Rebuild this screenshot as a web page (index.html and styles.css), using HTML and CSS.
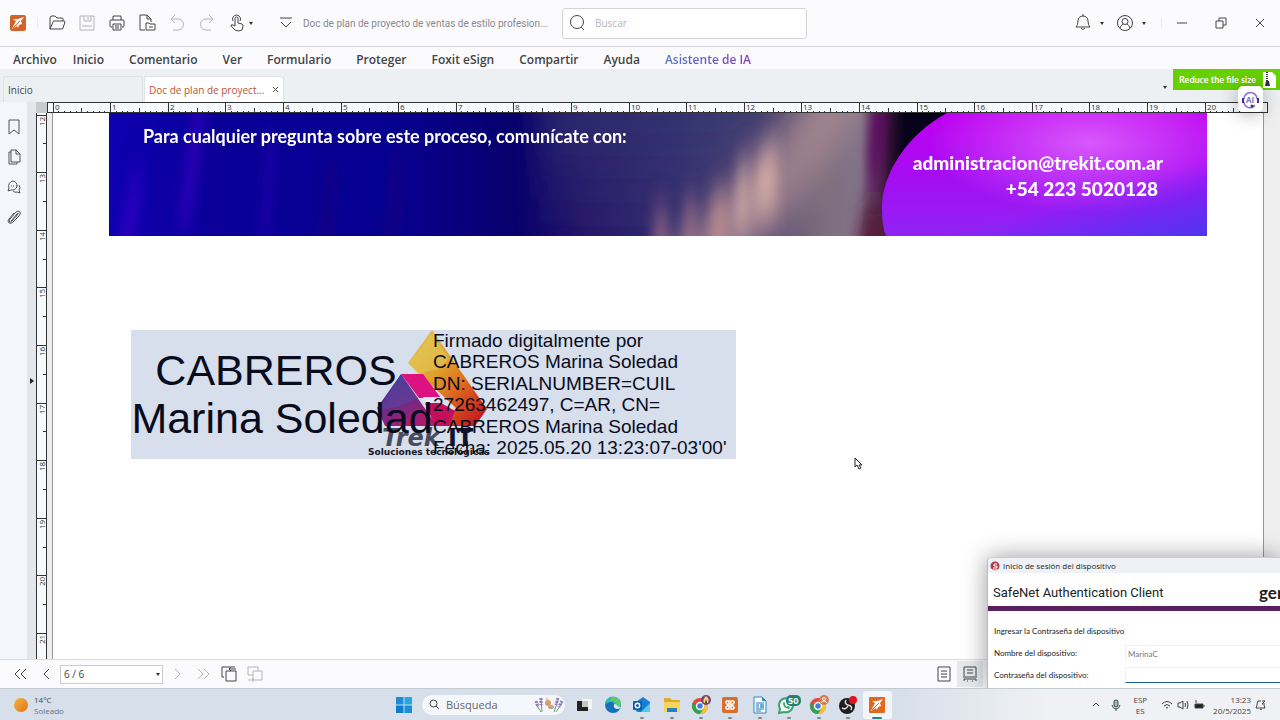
FILE: index.html
```html
<!DOCTYPE html>
<html lang="es">
  <head>
    <meta charset="utf-8">
    <title>Doc de plan de proyecto de ventas</title>
    <link rel="stylesheet" href="styles.css">
  </head>
  <body>
    <header class="titlebar">
      <svg class="logo" width="16" height="16" viewBox="0 0 16 16"><rect width="16" height="16" rx="2" fill="#d0622a"/><path d="M14 2 8 4 3 4l3 2-4 8 5-3 1 2 1-3 3-1-1-3z" fill="#fff"/><path d="M3 13 10 6" stroke="#d0622a" stroke-width="1"/></svg>
      <span class="sep"></span>
      <button class="tool" aria-label="Abrir"><svg width="18" height="18" viewBox="0 0 18 18"><path d="M2 15V4q0-2 2-2h3l2 2h5q1 0 1 1v2M2 15 5 8q0-1 1-1h10q1 0 1 1l-2 6q0 1-1 1z"/></svg></button>
      <button class="tool faded" aria-label="Guardar"><svg width="18" height="18" viewBox="0 0 18 18"><path d="M2 2h14v14H2zM6 2v5h7V2M10 3v3M4 12h10"/></svg></button>
      <button class="tool" aria-label="Imprimir"><svg width="18" height="18" viewBox="0 0 18 18"><path d="M5 6V2h8v4M4 13H3q-1 0-1-1V7q0-1 1-1h12q1 0 1 1v5q0 1-1 1h-1M5 10h8v6H5zM7 12h4M7 14h4"/></svg></button>
      <button class="tool" aria-label="Convertir"><svg width="18" height="18" viewBox="0 0 18 18"><path d="M7 16H2V1h7l4 4v3M9 1v4h4M8 16V9h3l1 1h5v6zM11 13h4"/></svg></button>
      <button class="tool faded" aria-label="Deshacer"><svg width="18" height="18" viewBox="0 0 18 18"><path d="M7 1 3 5l4 4M3 5h7a5 5 0 0 1 0 11H5"/></svg></button>
      <button class="tool faded" aria-label="Rehacer"><svg width="18" height="18" viewBox="0 0 18 18"><path d="m11 1 4 4-4 4M15 5H8a5 5 0 0 0 0 11h5"/></svg></button>
      <button class="tool" aria-label="Mano"><svg width="18" height="18" viewBox="0 0 18 18"><path d="M7 12V4.500a1.500 1.500 0 0 1 3 0V9l4 1q1 .500 1 2l-1 4q-4 2-7 0l-4-4q0-2 2-1zM5 7a4 4 0 1 1 7 0"/></svg></button>
      <span class="caret"></span>
      <button class="tool more" aria-label="Más herramientas"><svg width="14" height="14" viewBox="0 0 14 14"><path d="M1 2h12M2 6l5 5 5-5"/></svg></button>
      <span class="doc-title">Doc de plan de proyecto de ventas de estilo profesion...</span>
      <label class="search">
        <svg width="18" height="18" viewBox="0 0 18 18"><circle cx="8" cy="8" r="6.500"/><path d="m12 13 3 3"/></svg>
        <input type="text" placeholder="Buscar" aria-label="Buscar">
      </label>
      <div class="window-tools">
        <button class="tool" aria-label="Notificaciones"><svg width="18" height="18" viewBox="0 0 18 18"><path d="M2 13q2-2 2-6c0-3 2-5 5-5s5 2 5 5q0 4 2 6zM7 14q2 3 4 0M9 0v2"/></svg></button>
        <span class="caret"></span>
        <button class="tool" aria-label="Cuenta"><svg width="18" height="18" viewBox="0 0 18 18"><circle cx="9" cy="9" r="7.500"/><circle cx="9" cy="7.500" r="3"/><path d="M4 14q1-3 3-4M14 14q-1-3-3-4"/></svg></button>
        <span class="caret"></span>
        <span class="sep"></span>
        <button class="win" aria-label="Minimizar"><svg width="12" height="12" viewBox="0 0 12 12"><path d="M1 6h10"/></svg></button>
        <button class="win" aria-label="Restaurar"><svg width="12" height="12" viewBox="0 0 12 12"><path d="M1 4h7v7H1zM4 4V1h7v7H8"/></svg></button>
        <button class="win" aria-label="Cerrar"><svg width="12" height="12" viewBox="0 0 12 12"><path d="m2 2 8 8M10 2l-8 8"/></svg></button>
      </div>
    </header>

    <nav class="menu">
      <a class="file" href="#">Archivo</a>
      <a href="#">Inicio</a>
      <a href="#">Comentario</a>
      <a href="#">Ver</a>
      <a href="#">Formulario</a>
      <a href="#">Proteger</a>
      <a href="#">Foxit eSign</a>
      <a href="#">Compartir</a>
      <a href="#">Ayuda</a>
      <a href="#"><span class="ai">Asistente de IA</span></a>
    </nav>

    <div class="tabs">
      <a class="tab" href="#">Inicio</a>
      <div class="tab active"><a href="#">Doc de plan de proyect...</a><button aria-label="Cerrar pestaña"><svg width="7" height="7" viewBox="0 0 7 7"><path d="m1 1 5 5M6 1 1 6"/></svg></button></div>
      <span class="caret tab-caret"></span>
      <a class="promo" href="#">Reduce the file size
        <svg width="13" height="16" viewBox="0 0 13 16"><path d="M0 0h9l4 4v12H0z" fill="#fff"/><path d="M4 0v9" stroke="#333" stroke-width="2" stroke-dasharray="1 1"/><path d="M3 9h3l1 5H2z" fill="#333"/></svg>
      </a>
    </div>

    <main class="workspace">
      <aside class="panel">
        <button aria-label="Marcadores"><svg width="14" height="16" viewBox="0 0 14 16"><path d="M2 1h10v14l-5-4-5 4z"/></svg></button>
        <button aria-label="Páginas"><svg width="14" height="16" viewBox="0 0 14 16"><path d="M4 1h5l4 4v8H4zM9 1v4h4M4 3H2v12h8v-2"/></svg></button>
        <button aria-label="Comentarios"><svg width="14" height="16" viewBox="0 0 14 16"><path d="M6 2a5 4.500 0 1 1-2 9l-3 1 1-3a5 5 0 0 1 4-7zM12 6q2 3 0 5l1 3-3-1q-2 1-4-1M4 7h1M6 7h1M9 7h1"/></svg></button>
        <button aria-label="Adjuntos"><svg width="14" height="16" viewBox="0 0 14 16"><path d="m4 12 6-7q2-2 1 0l-6 7q-2 2-3 0 0-1 1-2l6-7q2-2 4 0 1 2-1 4l-6 6q-2 2-4 1-2-2 0-4l5-6"/></svg></button>
      </aside>
      <div class="collapse"></div>
      <div class="canvas">
        <div class="corner"></div>
        <svg class="ruler-h" id="rulerH"></svg>
        <svg class="ruler-v" id="rulerV"></svg>
        <div class="sheet">
          <div class="page">
            <section class="banner">
              <svg class="banner-art" viewBox="0 0 1098 123" preserveAspectRatio="none">
                <defs>
                  <linearGradient id="night" x1="0" x2="1" y1="0" y2="0">
                    <stop offset="0" stop-color="#0e00b0"/>
                    <stop offset=".1" stop-color="#0a0098"/>
                    <stop offset=".26" stop-color="#070090"/>
                    <stop offset=".37" stop-color="#07006c"/>
                    <stop offset=".43" stop-color="#261668"/>
                    <stop offset=".52" stop-color="#383070"/>
                    <stop offset=".6" stop-color="#5c4e74"/>
                    <stop offset=".65" stop-color="#7c6c7c"/>
                    <stop offset=".685" stop-color="#84748a"/>
                    <stop offset=".71" stop-color="#321232"/>
                    <stop offset=".725" stop-color="#05021a"/>
                  </linearGradient>
                  <linearGradient id="dusk" x1="0" y1="0" x2="0" y2="1">
                    <stop offset="0" stop-color="#303470" stop-opacity=".7"/>
                    <stop offset="1" stop-color="#303470" stop-opacity="0"/>
                  </linearGradient>
                  <linearGradient id="violet" x1="0" y1="0" x2="0" y2="1">
                    <stop offset="0" stop-color="#c000f0"/>
                    <stop offset=".5" stop-color="#a60cf2"/>
                    <stop offset="1" stop-color="#9024f2"/>
                  </linearGradient>
                  <linearGradient id="corner" x1=".7" y1=".6" x2="1" y2="1">
                    <stop offset="0" stop-color="#5030f8" stop-opacity="0"/>
                    <stop offset="1" stop-color="#5034f0"/>
                  </linearGradient>
                  <radialGradient id="glow">
                    <stop offset="0" stop-color="#e06cff" stop-opacity=".8"/>
                    <stop offset="1" stop-color="#e06cff" stop-opacity="0"/>
                  </radialGradient>
                  <filter id="soft" x="-50%" y="-50%" width="200%" height="200%"><feGaussianBlur stdDeviation="14"/></filter>
                  <filter id="streak" x="-20%" y="-50%" width="140%" height="200%"><feGaussianBlur stdDeviation="6 16"/></filter>
                </defs>
                <rect width="1098" height="123" fill="url(#night)"/>
                <path d="M430-20h250L570 123H430z" fill="url(#dusk)" filter="url(#soft)"/>
                <path d="m540 150 100-90 70-80h50l-70 110-60 60z" fill="#b8949a" opacity=".6" filter="url(#soft)"/>
                <g filter="url(#streak)">
                  <path d="M8 140 24 60h10l-12 80z" fill="#3000c4"/>
                  <path d="M68 115 86-10h12l-18 125z" fill="#3800c0" opacity=".8"/>
                  <path d="m148 130 10-110h10l-8 110z" fill="#2400b0" opacity=".6"/>
                  <path d="M275 140 285 40h9l-6 100zM210 140l8-90h8l-4 90z" fill="#1c0078" opacity=".6"/>
                  <path d="M545 160V96h14v64zM575 160V86h12v74z" fill="#a87488" opacity=".7"/>
                  <path d="m598 160 6-80h16l-2 80z" fill="#c08e90" opacity=".8"/>
                  <path d="m624 120 6-66 9-12v74zM642 105l6-60 20-16v66z" fill="#d4aca6" opacity=".9"/>
                  <path d="M764-20h16l-10 90h-12z" fill="#600064" opacity=".9"/>
                  <path d="M754 90h26v60h-34z" fill="#54183c" opacity=".9"/>
                </g>
                <path d="M838 0C800 20 772 60 773 97q0 16 4 26h321V0z" fill="url(#violet)"/>
                <ellipse cx="980" cy="30" rx="160" ry="70" fill="url(#glow)"/>
                <path d="M838 0C800 20 772 60 773 97q0 16 4 26h321V0z" fill="url(#corner)"/>
              </svg>
              <p class="ask">Para cualquier pregunta sobre este proceso, comunícate con:</p>
              <p class="contact">administracion@trekit.com.ar<br><span>+54 223 5020128</span></p>
            </section>

            <section class="signature">
              <svg class="trekit" width="140" height="129" viewBox="0 0 140 129">
                <defs>
                  <linearGradient id="gold" x1="0" y1="0" x2=".8" y2="1">
                    <stop offset="0" stop-color="#e2c848"/><stop offset=".45" stop-color="#e0a02c"/><stop offset=".7" stop-color="#dd641e"/><stop offset="1" stop-color="#c81c20"/>
                  </linearGradient>
                  <linearGradient id="plum" x1="0" y1="0" x2=".5" y2="1">
                    <stop offset="0" stop-color="#3d2f94"/><stop offset=".6" stop-color="#6a2c86"/><stop offset="1" stop-color="#a81c70"/>
                  </linearGradient>
                </defs>
                <path d="m66 0 55 79-12 17H73l17-18-48-45z" fill="url(#gold)"/>
                <path d="m66 4 17 25-12 11q-12 0-18 7L43 33z" fill="#e4cc60" opacity=".5"/>
                <path d="M35 44h22l18 24H53z" fill="#dc1280"/>
                <path d="M57 67h18l2 5H59z" fill="#e8e4f0"/>
                <path d="M59 73h16l14 8-6 15H69z" fill="#c4105c"/>
                <path d="m35 44 36 52H19L11 78z" fill="url(#plum)"/>
                <path d="m35 44 17 24-20 9-19 3z" fill="#5a50a8" opacity=".4"/>
                <text class="trek" x="16" y="116">Trek</text>
                <text class="trek it" x="82" y="116">IT</text>
                <text class="slogan" x="2" y="125">Soluciones tecnológicas</text>
              </svg>
              <p class="signer">CABREROS&nbsp;<br>Marina Soledad</p>
              <div class="details">
                <span>Firmado digitalmente por</span>
                <span>CABREROS Marina Soledad</span>
                <span>DN: SERIALNUMBER=CUIL</span>
                <span>27263462497, C=AR, CN=</span>
                <span>CABREROS Marina Soledad</span>
                <span>Fecha: 2025.05.20 13:23:07-03'00'</span>
              </div>
            </section>
          </div>
        </div>
      </div>
      <button class="badge" aria-label="Asistente IA"><svg width="19" height="19" viewBox="0 0 19 19"><path d="M3 9a6 6 0 0 1 13 0M3 12a6 6 0 0 0 11 3" fill="none" stroke="#8270d0" stroke-width="1.500"/><path d="M2 8v5M17 8v5" stroke="#40328c" stroke-width="2"/><circle cx="11" cy="16" r="1.500" fill="#40328c"/><text x="5" y="13">AI</text></svg></button>
      <svg class="pointer" width="9" height="13" viewBox="0 0 9 13"><path d="M1 1v9l2-2 2 4 2-1-2-3h3z" fill="#fff" stroke="#222"/></svg>
    </main>

    <footer class="status">
      <button class="tool" aria-label="Primera página"><svg width="14" height="14" viewBox="0 0 14 14"><path d="M7 2 2 7l5 5M13 2 8 7l5 5"/></svg></button>
      <button class="tool" aria-label="Página anterior"><svg width="14" height="14" viewBox="0 0 14 14"><path d="m10 2-5 5 5 5"/></svg></button>
      <label class="page-select"><select aria-label="Página"><option>6 / 6</option></select></label>
      <button class="tool faded" aria-label="Página siguiente"><svg width="14" height="14" viewBox="0 0 14 14"><path d="m5 2 5 5-5 5"/></svg></button>
      <button class="tool faded" aria-label="Última página"><svg width="14" height="14" viewBox="0 0 14 14"><path d="m2 2 5 5-5 5M8 2l5 5-5 5"/></svg></button>
      <button class="tool" aria-label="Vista anterior"><svg width="18" height="18" viewBox="0 0 18 18"><path d="M4 12H2V2h13M6 6h10v10H6zM9 4h7M11 2 9 4l2 2"/></svg></button>
      <button class="tool faded" aria-label="Vista siguiente"><svg width="18" height="18" viewBox="0 0 18 18"><path d="M7 10H2V2h10v4M7 6h9v9H7zM2 15h6M6 13l2 2-2 2"/></svg></button>
      <button class="tool single" aria-label="Una página"><svg width="16" height="16" viewBox="0 0 16 16"><path d="M2 1h12v14H2zM5 5h6M5 8h6M5 11h6"/></svg></button>
      <button class="tool selected" aria-label="Continuo"><svg width="16" height="16" viewBox="0 0 16 16"><path d="M2 10V1h12v9M5 4h6M5 7h6M1 11h14M2 15v-2h12v2M5 15h1M10 15h1"/></svg></button>
    </footer>

    <section class="dialog" role="dialog" aria-label="Inicio de sesión del dispositivo">
      <div class="dialog-title"><svg width="10" height="10" viewBox="0 0 10 10"><circle cx="5" cy="5" r="4.500" fill="#b03848"/><path d="M7 3H4v2h3v2H3M1 9h8" fill="none" stroke="#fff"/></svg>Inicio de sesión del dispositivo</div>
      <div class="dialog-head"><h2>SafeNet Authentication Client</h2><span class="brand">gem</span></div>
      <form class="dialog-form">
        <p>Ingresar la Contraseña del dispositivo</p>
        <label for="device">Nombre del dispositivo:</label><input id="device" type="text" value="MarinaC" readonly>
        <label for="pass">Contraseña del dispositivo:</label><input id="pass" class="focus" type="password">
      </form>
    </section>

    <div class="taskbar">
      <div class="weather"><span class="sun"></span><p>14°C<br><span>Soleado</span></p></div>
      <div class="dock">
        <button class="start" aria-label="Inicio"><svg width="16" height="16" viewBox="0 0 16 16"><path d="M0 0h8v8H0zM8 8h8v8H8z" fill="#1b8ed8"/><path d="M8 0h8v8H8z" fill="#2ba6e4"/><path d="M0 8h8v8H0z" fill="#0f7ccc"/><path d="M8 0v16M0 8h16" stroke="#bfe0f2"/></svg></button>
        <label class="find"><svg width="11" height="11" viewBox="0 0 11 11"><circle cx="4.500" cy="4.500" r="3.500"/><path d="m7 7 3 3"/></svg><input type="text" placeholder="Búsqueda" aria-label="Búsqueda"><svg class="flowers" width="30" height="18" viewBox="0 0 30 18"><path d="m7 16-5-8M8 16 7 3M20 16l4-12M22 16l6-9" stroke="#6a9a70" fill="none"/><path d="m2 5 2 6M7 2v7M24 2l-2 7M28 5l-3 6" stroke="#9078bc" stroke-width="3" stroke-dasharray="2 1" fill="none"/><circle cx="14" cy="7" r="3" fill="#d8a060"/><ellipse cx="17" cy="11" rx="3" ry="2" fill="#c8a088"/><path d="m11 4 2-3 2 3z" fill="#e8c8b0"/></svg></label>
        <div class="apps">
          <button aria-label="Escritorios"><svg width="18" height="18" viewBox="0 0 18 18"><path d="M7 3h10v10H7z" fill="#f4f4f2"/><path d="M2 5h5v6h6v4H2z" fill="#222"/><path d="M7 5h6v6H7z" fill="#c4c6c6"/></svg></button>
          <button aria-label="Edge"><svg width="18" height="18" viewBox="0 0 18 18"><circle cx="9" cy="9" r="8" fill="#1670bc"/><path d="M1 9a8 8 0 0 1 16-1q0 4-5 4-3 0-2-3 0-3-3-3-4 0-6 3z" fill="#35b8b0"/><path d="M10 1q7 1 7 7 0 4-5 4 2-3 0-5-2-3-6-2 1-4 4-4z" fill="#5ecb6a"/><path d="M12 8q1 3 5 3-1 2-4 2-4-1-3-4 0-1 2-1z" fill="#d8e8f2"/></svg></button>
          <button class="open" aria-label="Outlook"><svg width="18" height="18" viewBox="0 0 18 18"><path d="m3 6 7-5 7 5v9q0 1-1 1H5q-2 0-2-2z" fill="#1a7ed0"/><path d="M17 7 8 16h8q1 0 1-1z" fill="#50c8f0"/><rect y="5" width="9" height="9" rx="1" fill="#0d5fae"/><circle cx="4.500" cy="9.500" r="2.200" fill="none" stroke="#fff" stroke-width="1.400"/></svg></button>
          <button class="open" aria-label="Archivos"><svg width="18" height="18" viewBox="0 0 18 18"><path d="M1 3q0-1 1-1h5l2 2h7q1 0 1 1v10H1z" fill="#e3a92b"/><path d="M1 6h16v10H1z" fill="#f7d25c"/><path d="M4 12h10v4H4z" fill="#2580bc"/></svg></button>
          <button class="open" aria-label="Chrome"><svg width="20" height="20" viewBox="0 0 20 20"><circle cx="9" cy="11" r="8" fill="#e0483a"/><path d="M2 7a8 8 0 0 0 7 12l4-6-7 1z" fill="#2fa350"/><path d="M9 19a8 8 0 0 0 7-12h-7l4 6z" fill="#f4c430"/><circle cx="9" cy="11" r="3.500" fill="#3f7ee0" stroke="#fff" stroke-width="1.500"/><circle cx="15" cy="5" r="5" fill="#7c3c8c"/><path d="M15 1q4 3 2 7h-4q-2-3 2-7z" fill="#f6d870"/><path d="m15 4 1 4h-2z" fill="#333"/></svg></button>
          <button class="open" aria-label="XAMPP"><svg width="18" height="18" viewBox="0 0 18 18"><rect x="1" y="1" width="16" height="16" rx="2" fill="#dc6e2c"/><path d="M5 5h3v3h2V5h3M5 13h3v-3h2v3h3M5 5v2l2 2-2 2v2M13 5v2l-2 2 2 2v2" fill="none" stroke="#fff" stroke-width="1.500"/></svg></button>
          <button class="open" aria-label="Writer"><svg width="18" height="18" viewBox="0 0 18 18"><path d="M3 1h8l4 4v12H3z" fill="#f8fcff" stroke="#2a88c0"/><path d="M11 1v4h4z" fill="#2a88c0"/><path d="M5 7h8M5 9h3M5 11h3M5 13h8M5 15h5" stroke="#2a78b0"/><path d="M9 8h4v4H9z" fill="#60b0d8"/></svg></button>
          <button class="open" aria-label="WhatsApp"><svg width="24" height="20" viewBox="0 0 24 20"><path d="m2 18 1-4a7 7 0 1 1 4 3z" fill="#f0f8f4" stroke="#3ca070" stroke-width="2"/><path d="M6 8q0 5 6 6l1-2-2-1-1 1-2-2 0-2-1-1z" fill="#3ca070"/><rect x="9" width="15" height="11" rx="5" fill="#267f70"/><text class="count" x="11" y="9">50</text></svg></button>
          <button class="open" aria-label="Chrome trabajo"><svg width="20" height="20" viewBox="0 0 20 20"><circle cx="9" cy="11" r="8" fill="#e0483a"/><path d="M2 7a8 8 0 0 0 7 12l4-6-7 1z" fill="#2fa350"/><path d="M9 19a8 8 0 0 0 7-12h-7l4 6z" fill="#f4c430"/><circle cx="9" cy="11" r="3.500" fill="#3f7ee0" stroke="#fff" stroke-width="1.500"/><circle cx="15" cy="5" r="5" fill="#d67c50"/><circle cx="15" cy="4" r="1.500" fill="none" stroke="#fff"/><path d="M12 8q3-4 6 0" fill="none" stroke="#fff"/></svg></button>
          <button class="open" aria-label="OBS"><svg width="20" height="20" viewBox="0 0 20 20"><circle cx="9" cy="11" r="8" fill="#1f1d20"/><path d="M8 5q-2 4 2 5M4 13q4 2 6-2M13 15q2-4-3-5" fill="none" stroke="#ddd" stroke-width="1.500"/><circle cx="15" cy="5" r="4" fill="#e0141c"/></svg></button>
          <button class="open current" aria-label="Foxit"><svg width="16" height="16" viewBox="0 0 16 16"><rect width="16" height="16" rx="1" fill="#e2681c"/><path d="M14 2 8 4 3 4l3 2-4 8 5-3 1 2 1-3 3-1-1-3z" fill="#fff"/><path d="M3 13 10 6" stroke="#e2681c"/></svg></button>
        </div>
      </div>
      <div class="tray">
        <svg class="chevron" width="10" height="12" viewBox="0 0 10 12"><path d="m2 7 3-3 3 3"/></svg>
        <svg width="10" height="12" viewBox="0 0 10 12"><rect x="3" y="1" width="4" height="7" rx="2" fill="#9cc0bc"/><path d="M1 6q1 4 4 4t4-4M5 10v2"/></svg>
        <p class="lang">ESP<br>ES</p>
        <svg width="12" height="12" viewBox="0 0 12 12"><path d="M1 5q5-5 10 0M3 7q3-3 6 0M5 9q1-1 2 0"/></svg>
        <svg width="12" height="12" viewBox="0 0 12 12"><path d="M1 4h2l3-2v8L3 8H1zM8 4q1 2 0 4M10 2q2 4 0 8"/></svg>
        <svg width="12" height="12" viewBox="0 0 12 12"><path d="M2 5h8v4H2zM11 6v2M3 1v3" fill="#222"/></svg>
        <p class="clock">13:23<br>20/5/2025</p>
        <svg width="12" height="12" viewBox="0 0 12 12"><path d="M6 2H3q-1 2-1 4L1 9h9l-1-3M5 10q1 1 2 0M7 2h3L7 5h3"/></svg>
      </div>
    </div>

    <script>
      var NS = "http://www.w3.org/2000/svg";
      var CM = 57.6; // un centímetro al zoom actual

      function addTick(svg, pos, size, vertical) {
        var line = document.createElementNS(NS, "rect");
        line.setAttribute(vertical ? "y" : "x", pos);
        line.setAttribute(vertical ? "x" : "y", 11 - size);
        line.setAttribute("width", vertical ? size : 1);
        line.setAttribute("height", vertical ? 1 : size);
        svg.appendChild(line);
      }

      function drawRuler(id, first, last, start, vertical) {
        var svg = document.getElementById(id);
        for (var i = first * 10; i < last * 10; i++) {
          var pos = Math.floor(start + ((i - first * 10) * CM) / 10);
          addTick(svg, pos, i % 10 === 0 ? 11 : i % 5 === 0 ? 5 : 2, vertical);
          if (i % 10 === 0) {
            var text = document.createElementNS(NS, "text");
            if (vertical) {
              text.setAttribute("transform", "translate(8 " + (pos + 11) + ") rotate(-90)");
            } else {
              text.setAttribute("x", pos + 2);
              text.setAttribute("y", 8);
            }
            text.textContent = i / 10;
            svg.appendChild(text);
          }
        }
      }

      drawRuler("rulerH", 0, 21, 6, false);
      drawRuler("rulerV", 12, 21.4, 2, true);
    </script>
  </body>
</html>
```
FILE: styles.css
```css
* {
  box-sizing: border-box;
}

body {
  margin: 0;
  height: 100vh;
  overflow: hidden;
  display: flex;
  flex-direction: column;
  font-family: "Open Sans", "Noto Sans", sans-serif;
  font-size: 10px;
  color: #444;
  background: #fff;
}

p, h2 {
  margin: 0;
}

a {
  color: inherit;
  text-decoration: none;
}

button, input, select {
  font: inherit;
  color: inherit;
  padding: 0;
  border: 0;
  background: none;
}

svg {
  flex: none;
}

.titlebar {
  height: 47px;
  flex: none;
  display: flex;
  align-items: center;
  padding-left: 10px;
  background: #fbfbfe;
  border-bottom: 1px solid #d6d6da;
}

.sep {
  width: 1px;
  height: 10px;
  margin: 0 4px 0 11px;
  background: #ececf0;
}

.tool, .win {
  width: 30px;
  height: 30px;
  flex: none;
  display: flex;
  align-items: center;
  justify-content: center;
}

.tool svg, .win svg, .search svg, .panel svg, .tab svg, .find svg, .tray svg {
  fill: none;
  stroke: #444;
}

.tool.faded svg {
  stroke: #b4b4b8;
}

.caret {
  border: 2px solid transparent;
  border-top: 3px solid #333;
  border-bottom: 0;
  margin-left: -3px;
}

.more {
  margin-left: 18px;
}

.doc-title {
  width: 261px;
  flex: none;
  padding-left: 2px;
  color: #8a8a8e;
  font-family: "Roboto", sans-serif;
  white-space: nowrap;
}

.search {
  width: 245px;
  height: 31px;
  display: flex;
  align-items: center;
  gap: 8px;
  padding-left: 6px;
  border: 1px solid #d4d4d8;
  border-radius: 3px;
  background: #fff;
}

.search input {
  flex: 1;
  min-width: 0;
}

input::placeholder {
  color: #b4b4b8;
  opacity: 1;
}

.window-tools {
  margin-left: auto;
  display: flex;
  align-items: center;
  padding-right: 1px;
}

.window-tools .caret {
  margin: 0 6px 0 2px;
}

.window-tools .sep {
  margin: 0 0 0 9px;
}

.window-tools .win {
  width: 39px;
}

.menu {
  height: 22px;
  flex: none;
  display: flex;
  align-items: center;
  padding-top: 2px;
  background: #fbfbfe;
  font-size: 12px;
  font-weight: 600;
}

.menu a {
  padding: 0 12px 0 13px;
}

.menu .file {
  padding-right: 3px;
}

.ai {
  background: linear-gradient(90deg, #4a78c8, #8a3cb4);
  background-clip: text;
  -webkit-background-clip: text;
  color: transparent;
}

.tabs {
  height: 33px;
  flex: none;
  display: flex;
  align-items: flex-end;
  gap: 1px;
  padding-left: 3px;
  background: #edf0f2;
}

.tab {
  width: 140px;
  height: 26px;
  display: flex;
  align-items: center;
  justify-content: space-between;
  padding: 0 4px;
  border: 1px solid #dfe3e6;
  border-bottom: 0;
  border-radius: 3px 3px 0 0;
  white-space: nowrap;
}

.tab.active {
  background: #fff;
  color: #b85430;
}

.tab button {
  display: flex;
}

.tab-caret {
  margin: 0 5px 13px auto;
}

.promo {
  align-self: flex-start;
  height: 21px;
  display: flex;
  align-items: center;
  gap: 7px;
  padding: 0 4px 0 6px;
  background: #66d000;
  color: #fff;
  font-family: "Lato", sans-serif;
  font-size: 9px;
  font-weight: bold;
  line-height: 12px;
  white-space: nowrap;
}

.workspace {
  position: relative;
  flex: 1;
  min-height: 0;
  display: flex;
}

.panel {
  width: 27px;
  display: flex;
  flex-direction: column;
  align-items: center;
  gap: 14px;
  padding-top: 17px;
  padding-left: 1px;
  background: #f3f6fa;
}

.panel button {
  height: 16px;
}

.panel svg {
  display: block;
  stroke: #555;
}

.collapse {
  width: 9px;
  display: flex;
  align-items: center;
  justify-content: center;
  background: #e3e6ea;
}

.collapse::after {
  content: "";
  border: 3px solid transparent;
  border-left: 4px solid #222;
  border-right: 0;
}

.canvas {
  flex: 1;
  min-width: 0;
  display: grid;
  grid-template-columns: 11px 1fr;
  grid-template-rows: 11px 1fr;
  background: #efefef;
}

.corner {
  background: #c8cacc;
}

.ruler-h, .ruler-v {
  display: block;
  width: 100%;
  height: 100%;
  background: #f6fafc;
  fill: #333;
  font-family: "Open Sans", sans-serif;
  font-size: 8px;
  min-width: 0;
  min-height: 0;
}

.ruler-h {
  width: calc(100% - 12px);
  outline: 1px solid #333;
  outline-offset: -1px;
}

.ruler-v {
  border-left: 1px solid #333;
  border-right: 1px solid #333;
}

.sheet {
  min-height: 0;
  overflow: hidden;
  padding: 0 16px 0 5px;
}

.page {
  height: 100%;
  padding: 0 56px;
  border-left: 1px solid #999;
  border-right: 1px solid #999;
  background: #fff;
}

.banner {
  position: relative;
  height: 123px;
  display: flex;
  justify-content: space-between;
  padding: 11px 44px 0 34px;
  color: #fff;
  font-family: "Lato", sans-serif;
  font-size: 18px;
  font-weight: bold;
  line-height: 24px;
  white-space: nowrap;
}

.banner-art {
  position: absolute;
  inset: 0;
  width: 100%;
  height: 100%;
}

.banner p {
  position: relative;
}

.contact {
  padding-top: 26px;
  text-align: right;
  font-size: 19px;
  font-weight: 900;
  line-height: 26px;
}

.contact span {
  padding-right: 5px;
}

.signature {
  position: relative;
  width: 605px;
  height: 129px;
  margin: 94px 0 0 22px;
  display: flex;
  background: #d7deec;
  color: #080c1c;
  font-family: "Liberation Sans", sans-serif;
}

.trekit {
  position: absolute;
  left: 235px;
  top: 0;
}

.trek {
  font: italic bold 24px "DejaVu Sans", sans-serif;
  fill: #484c5c;
}

.it {
  font-style: normal;
  fill: #12142c;
}

.slogan {
  font: bold 9px "DejaVu Sans", sans-serif;
  fill: #14161e;
}

.signer {
  position: relative;
  width: 302px;
  padding-top: 16px;
  font-size: 43px;
  line-height: 48px;
  text-align: center;
  white-space: nowrap;
}

.details {
  position: relative;
  display: grid;
  align-items: center;
  font-size: 19px;
  line-height: 20px;
  white-space: nowrap;
}

.badge {
  position: absolute;
  right: 17px;
  top: -16px;
  width: 25px;
  height: 26px;
  display: flex;
  align-items: center;
  justify-content: center;
  border-radius: 5px;
  background: #fff;
  box-shadow: 0 2px 18px rgba(0, 0, 0, .3);
}

.badge text {
  font: bold 8px "Open Sans", sans-serif;
  fill: #7a70c0;
}

.pointer {
  position: absolute;
  left: 854px;
  top: 355px;
}

.status {
  height: 29px;
  flex: none;
  display: flex;
  align-items: center;
  padding-left: 7px;
  border-top: 1px solid #dcdcde;
  background: #fbfbfd;
}

.status .tool {
  width: 26px;
  height: 26px;
}

.page-select {
  position: relative;
  margin: 0 1px;
}

.page-select select {
  display: block;
  width: 103px;
  height: 19px;
  padding-left: 3px;
  appearance: none;
  border: 1px solid #ccc;
  background: #fff;
}

.page-select::after {
  content: "";
  position: absolute;
  right: 3px;
  top: 8px;
  border: 2px solid transparent;
  border-top: 3px solid #333;
  border-bottom: 0;
}

.status .single {
  margin-left: auto;
}

.status .selected {
  background: #e6e9ec;
  margin-right: 297px;
}

.dialog {
  position: absolute;
  right: 0;
  bottom: 32px;
  width: 293px;
  height: 131px;
  overflow: hidden;
  border-left: 1px solid #bbb;
  border-top: 1px solid #ccc;
  border-radius: 5px 0 0 0;
  background: #fff;
  box-shadow: 0 0 24px rgba(0, 0, 0, .4);
  color: #222;
  font-size: 8px;
  white-space: nowrap;
}

.dialog-title {
  height: 15px;
  display: flex;
  align-items: center;
  gap: 3px;
  padding-left: 2px;
  background: #eef2f6;
}

.dialog-head {
  height: 38px;
  display: flex;
  align-items: center;
  justify-content: space-between;
  padding-top: 5px;
  padding-left: 5px;
  border-bottom: 5px solid #58205c;
}

.dialog-head h2 {
  font: 13px "Roboto", sans-serif;
}

.brand {
  width: 21px;
  overflow: hidden;
  font: bold 17px "Lato", sans-serif;
}

.dialog-form {
  display: grid;
  grid-template-columns: 131px 1fr;
  grid-auto-rows: 22px;
  align-items: center;
  padding: 9px 0 0 6px;
  font-family: "Lato", sans-serif;
}

.dialog-form p {
  grid-column: 1 / 3;
}

.dialog-form input {
  width: 100%;
  height: 16px;
  padding-left: 2px;
  border-top: 1px solid #f2f2f2;
  border-left: 1px solid #f2f2f2;
  color: #777;
}

.dialog-form .focus {
  border-bottom: 1px solid #1c60a4;
}

.taskbar {
  position: relative;
  z-index: 1;
  height: 32px;
  flex: none;
  display: grid;
  grid-template-columns: 1fr auto 1fr;
  align-items: center;
  padding-left: 8px;
  border-top: 1px solid #c4cad2;
  background: linear-gradient(90deg, #d6dfea 0, #d6dfea 70%, #f0f1f4 82%);
  font-size: 9px;
  line-height: 11px;
}

.weather {
  display: flex;
  align-items: center;
  gap: 6px;
  padding-left: 6px;
}

.weather p {
  font-size: 8px;
}

.weather p span {
  color: #6c737c;
}

.sun {
  width: 14px;
  height: 14px;
  border-radius: 50%;
  background: linear-gradient(135deg, #f4b43c, #e27418);
}

.dock {
  display: flex;
  align-items: center;
  gap: 4px;
}

.dock button {
  display: flex;
}

.find {
  width: 143px;
  height: 20px;
  display: flex;
  align-items: center;
  gap: 6px;
  padding: 0 1px 0 7px;
  margin-left: 6px;
  border-radius: 10px;
  background: #f4f7fb;
  font-size: 11px;
}

.find input {
  flex: 1;
  min-width: 0;
}

.find input::placeholder {
  color: #666;
}

.find .flowers {
  stroke: none;
}

.apps {
  width: 323px;
  display: grid;
  grid-template-columns: repeat(11, 1fr);
}

.apps button {
  position: relative;
  height: 28px;
  align-items: center;
  justify-content: center;
}

.apps .open::after {
  content: "";
  position: absolute;
  bottom: 0;
  width: 4px;
  height: 2px;
  border-radius: 1px;
  background: #808890;
}

.apps .current {
  background: #f2f5f9;
  border-radius: 3px;
}

.apps .current::after {
  width: 10px;
  background: #2c8080;
}

.count {
  font: bold 9px "Open Sans", sans-serif;
  fill: #fff;
}

.tray {
  display: flex;
  align-items: center;
  justify-content: flex-end;
  gap: 4px;
  padding-right: 13px;
  font-size: 8px;
}

.chevron {
  margin-right: 6px;
}

.lang {
  padding: 0 10px 0 8px;
  text-align: center;
}

.clock {
  padding-left: 4px;
  text-align: right;
}
```
